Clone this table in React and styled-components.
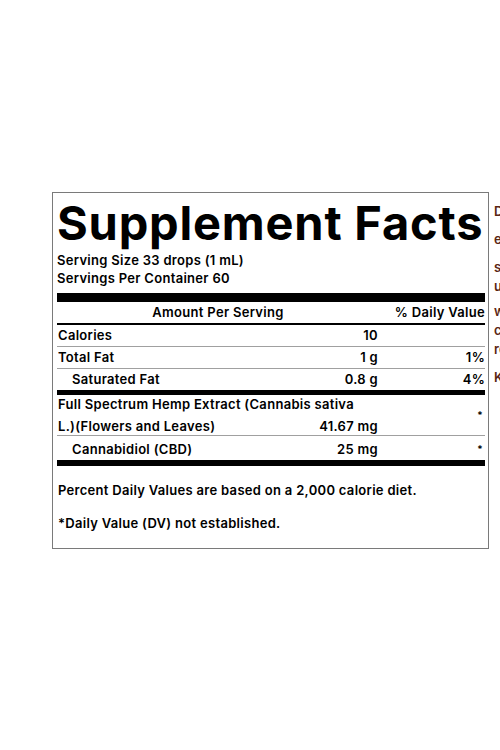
import styled, { createGlobalStyle } from "styled-components";

const GlobalStyle = createGlobalStyle`
  html, body {
    margin: 0;
    padding: 0;
    background: #fff;
    overflow: hidden;
  }
  body {
    font-family: Inter, "Liberation Sans", sans-serif;
    color: #000;
  }
`;

const Page = styled.div`
  display: flex;
  align-items: flex-start;
  gap: 5px;
  padding: 192px 0 0 52px;
  width: 700px;
`;

const Label = styled.section`
  flex: none;
  width: 437px;
  box-sizing: border-box;
  border: 1px solid #7a7a7a;
  padding: 0 3px 16px 4px;
  font-size: 13px;
  font-weight: 600;
  letter-spacing: 0.3px;
`;

const Title = styled.h1`
  margin: 5px 0 0 0;
  font-size: 47px;
  line-height: 50px;
  font-weight: 700;
  letter-spacing: 0.8px;
  white-space: nowrap;
`;

const Serving = styled.div`
  line-height: 18px;
  margin-top: 3px;
  padding-bottom: 6px;
`;

const Rule = styled.div`
  height: ${(p) => p.$size}px;
  background: #000;
`;

const Row = styled.div`
  display: grid;
  grid-template-columns: 1fr auto 107px;
  align-items: center;
  row-gap: 4px;
  line-height: ${(p) => p.$line || 21}px;
  min-height: ${(p) => p.$height || 21}px;
  padding-top: ${(p) => p.$pad || 0}px;
  box-sizing: border-box;
  border-bottom: ${(p) =>
    p.$rule === "bold" ? "2px solid #000" : p.$rule === "thin" ? "1px solid #a0a0a0" : "none"};
`;

const Name = styled.span`
  grid-column: ${(p) => (p.$wide ? "1 / 3" : "1")};
  padding-left: ${(p) => (p.$indent ? 15 : 1)}px;
  text-align: ${(p) => (p.$center ? "center" : "left")};
  white-space: nowrap;
`;

const Amount = styled.span`
  grid-column: 2;
  text-align: right;
`;

const Daily = styled.span`
  grid-column: 3;
  grid-row: ${(p) => p.$rows || "auto"};
  text-align: right;
`;

const Star = styled(Daily)`
  font-size: 10px;
  padding-right: 2px;
`;

const Note = styled.p`
  margin: ${(p) => p.$top}px 0 0 1px;
  line-height: 18px;
`;

const Side = styled.aside`
  flex: none;
  padding-top: 10px;
  font-size: 13px;
  font-weight: 600;
  line-height: 19px;
  color: #5b2614;
  white-space: nowrap;
`;

const SideLine = styled.div`
  margin-top: ${(p) => p.$gap || 0}px;
`;

const nutrients = [
  { name: "Calories", amount: "10", dv: "", rule: "thin" },
  { name: "Total Fat", amount: "1 g", dv: "1%", rule: "thin" },
  { name: "Saturated Fat", amount: "0.8 g", dv: "4%", indent: true },
];

export default function App() {
  return (
    <>
      <GlobalStyle />
      <Page>
        <Label>
          <Title>Supplement Facts</Title>
          <Serving>
            Serving Size 33 drops (1 mL)
            <br />
            Servings Per Container 60
          </Serving>
          <Rule $size={9} />
          <Row $rule="bold">
            <Name $wide $center>Amount Per Serving</Name>
            <Daily>% Daily Value</Daily>
          </Row>
          {nutrients.map((n) => (
            <Row key={n.name} $rule={n.rule}>
              <Name $indent={n.indent}>{n.name}</Name>
              <Amount>{n.amount}</Amount>
              <Daily>{n.dv}</Daily>
            </Row>
          ))}
          <Rule $size={5} />
          <Row $rule="thin" $line={18} $height={41}>
            <Name $wide>Full Spectrum Hemp Extract (Cannabis sativa</Name>
            <Star $rows="1 / 3">*</Star>
            <Name>L.)(Flowers and Leaves)</Name>
            <Amount>41.67 mg</Amount>
          </Row>
          <Row $height={23} $pad={3}>
            <Name $indent>Cannabidiol (CBD)</Name>
            <Amount>25 mg</Amount>
            <Star>*</Star>
          </Row>
          <Rule $size={6} />
          <Note $top={15}>Percent Daily Values are based on a 2,000 calorie diet.</Note>
          <Note $top={15}>*Daily Value (DV) not established.</Note>
        </Label>
        <Side>
          <SideLine>Directions: shake well</SideLine>
          <SideLine $gap={9}>enjoy daily</SideLine>
          <SideLine $gap={9}>shake before</SideLine>
          <SideLine>use only as</SideLine>
          <SideLine $gap={6}>with food</SideLine>
          <SideLine>consult</SideLine>
          <SideLine>recommended</SideLine>
          <SideLine $gap={9}>Keep out</SideLine>
        </Side>
      </Page>
    </>
  );
}
